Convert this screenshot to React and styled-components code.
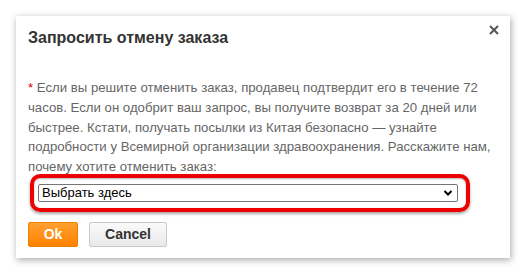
import React from "react";
import styled, { createGlobalStyle } from "styled-components";

const Global = createGlobalStyle`
  html, body { margin: 0; padding: 0; background: #fff; }
  body { font-family: Arial, "Liberation Sans", sans-serif; }
`;

const Page = styled.div`
  padding: 16px;
  width: 526px;
  height: 278px;
  box-sizing: border-box;
`;

const Dialog = styled.div`
  position: relative;
  width: 494px;
  height: 242px;
  box-sizing: border-box;
  background: #fff;
  box-shadow: 1px 2px 7px rgba(0, 0, 0, 0.35);
  padding: 10px 12px 0 12px;
  display: flex;
  flex-direction: column;
`;

const Title = styled.h2`
  margin: 0;
  font-family: Arial, "Liberation Sans", sans-serif;
  font-size: 16px;
  font-weight: bold;
  color: #333;
  line-height: 24px;
`;

const Close = styled.button`
  position: absolute;
  top: 8px;
  right: 9px;
  width: 14px;
  height: 12px;
  padding: 0;
  border: 0;
  background: none;
  display: flex;
  align-items: center;
  justify-content: center;
`;

const Text = styled.p`
  margin: 28px 0 0 0;
  font-size: 13.2px;
  line-height: 19.8px;
  color: #666;
`;

const Star = styled.span`
  color: #c00;
`;

const Ring = styled.div`
  margin: -3px 0 0 2px;
  width: 440px;
  box-sizing: border-box;
  border: 4px solid #ee0000;
  border-radius: 10px;
  padding: 6px 8px 6px 4px;
  box-shadow: 0 2px 3px rgba(0, 0, 0, 0.35), inset 0 1px 2px rgba(0, 0, 0, 0.3);
`;

const SelectBox = styled.div`
  position: relative;
  height: 18px;
  box-sizing: border-box;
  border: 1px solid #767676;
  border-radius: 2px;
  background: #fff;
  display: flex;
  align-items: center;
  padding-left: 3px;
  font-size: 13px;
  color: #000;
`;

const Chevron = styled.svg`
  position: absolute;
  right: 4px;
  top: 4px;
`;

const Buttons = styled.div`
  display: flex;
  gap: 11px;
  margin-top: 10px;
`;

const Btn = styled.button`
  height: 25px;
  box-sizing: border-box;
  font-family: Arial, "Liberation Sans", sans-serif;
  font-size: 14px;
  font-weight: bold;
  border-radius: 2px;
  padding: 0;
  cursor: pointer;
  width: ${(p) => p.$w}px;
  ${(p) =>
    p.$primary
      ? `
    color: #fff;
    border: 1px solid #f08000;
    background: linear-gradient(#ffa030, #ff8200);
  `
      : `
    color: #333;
    border: 1px solid #c8c8c8;
    background: linear-gradient(#fafafa, #e9e9e9);
  `}
`;

export default function App() {
  return (
    <Page>
      <Global />
      <Dialog>
        <Title>Запросить отмену заказа</Title>
        <Close aria-label="close">
          <svg width="10" height="10" viewBox="0 0 10 10">
            <path d="M1 1 L9 9 M9 1 L1 9" stroke="#555" strokeWidth="2" />
          </svg>
        </Close>
        <Text>
          <Star>*</Star> Если вы решите отменить заказ, продавец подтвердит его в течение 72
          часов. Если он одобрит ваш запрос, вы получите возврат за 20 дней или
          быстрее. Кстати, получать посылки из Китая безопасно — узнайте
          подробности у Всемирной организации здравоохранения. Расскажите нам,
          почему хотите отменить заказ:
        </Text>
        <Ring>
          <SelectBox>
            Выбрать здесь
            <Chevron width="10" height="8" viewBox="0 0 10 8">
              <path d="M1.5 2 L5 5.5 L8.5 2" fill="none" stroke="#000" strokeWidth="2" />
            </Chevron>
          </SelectBox>
        </Ring>
        <Buttons>
          <Btn $primary $w={50}>Ok</Btn>
          <Btn $w={78}>Cancel</Btn>
        </Buttons>
      </Dialog>
    </Page>
  );
}
